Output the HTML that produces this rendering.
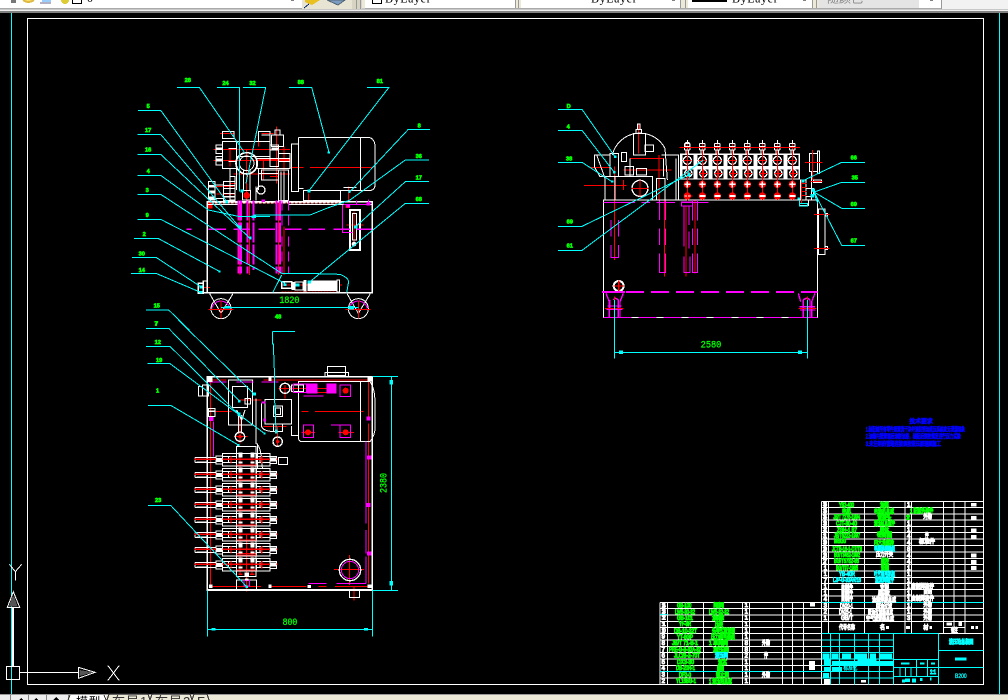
<!DOCTYPE html>
<html><head><meta charset="utf-8"><title>CAD</title>
<style>
html,body{margin:0;padding:0;background:#000;width:1008px;height:700px;overflow:hidden}
svg{position:absolute;left:0;top:0;font-family:"Liberation Sans","Noto Sans CJK SC",sans-serif}
.z{fill:none;stroke-width:3}
.w{stroke:#fff;fill:none}.r{stroke:#f00;fill:none}.m{stroke:#f0f;fill:none}.c{stroke:#0ff;fill:none}
.fw{fill:#fff;stroke:none}.fr{fill:#f00;stroke:none}.fm{fill:#f0f;stroke:none}.fc{fill:#0ff;stroke:none}.fk{fill:#000;stroke:none}
.lb{fill:#0f0;stroke:#0f0;stroke-width:2;font-size:17px;font-weight:bold}
.dm{fill:#0f0;stroke:#0f0;stroke-width:1;font-size:30px;font-family:"Liberation Mono",monospace}
.tg text{font-size:18px;stroke-width:3.2}
.tg .g{fill:#0f0;stroke:#0f0}.tg .k{fill:#0ff;stroke:#0ff}.tg .h{fill:#fff;stroke:#fff}
.bl text{font-size:18px;fill:#00f;stroke:#00f;stroke-width:2.4}
</style></head><body>
<svg width="1008" height="700" viewBox="0 0 1008 700" shape-rendering="crispEdges">
<defs>
<g id="row">
<path class="w" d="M195,412H258M195,428H258M195,412V428M258,408H278V432H258ZM278,400H320V438H278ZM380,400H420V438H380ZM420,410H440V430H420ZM278,410H320M278,428H320M380,410H420M380,428H420"/>
<path class="w" d="M295,410V428H310M390,412V428M320,400H380M320,438H380"/>
<path class="r" d="M193,418H443M303,408V430M395,408V430" stroke-width="4"/>
<path class="fw" d="M325,398H337V412H325ZM361,398H373V412H361ZM258,414H278V426H258ZM420,412H440V424H420ZM200,424H230V428H200ZM325,425H337V430H325ZM361,425H373V430H361Z"/>
<path class="r" d="M320,435H380M325,448H337M360,448H374" stroke-width="4"/>
</g>
<g id="vc">
<rect class="fw" x="-22" y="0" width="45" height="78"/>
<rect class="fk" x="-15" y="5" width="33" height="33"/>
<rect class="fk" x="-15" y="48" width="33" height="27"/>
<circle class="w" cx="0" cy="21" r="12" stroke-width="4"/><circle class="w" cx="3" cy="60" r="11" stroke-width="4"/>
<path class="r" d="M-12,21H12M0,9V33M-8,60H14M3,48V72M0,-40V140" stroke-width="3"/>
<path class="w" d="M-8,-30H8M-8,-20H8M-8,-10H8M-8,-30V-10M8,-30V-10M0,-40V-30M-4,-10V0M4,-10V0"/>
<circle class="fr" cx="0" cy="93" r="11"/>
<circle class="fr" cx="0" cy="128" r="11"/>
<path class="w" d="M-9,93H9M0,84V102M-9,128H9" stroke-width="5"/>
</g>
<g id="wh">
<circle class="w" cx="0" cy="0" r="30"/><path class="w" d="M-34,-45L0,14L36,-45"/>
<path class="m" d="M-28,0A28,28 0 0 1 27,0"/>
<path class="r" d="M-38,3H37M0,-25V30"/>
</g>
</defs>

<rect width="1008" height="700" fill="#000"/>

<!-- toolbar -->
<rect x="0" y="0" width="1008" height="13" fill="#ece9d8"/>
<rect x="0" y="8" width="1008" height="2" fill="#c8c8c8"/>
<rect x="0" y="10" width="1008" height="1" fill="#eee"/>
<rect x="0" y="11" width="1008" height="2" fill="#808080"/>
<rect x="0" y="0" width="302" height="8" fill="#fff"/>
<rect x="302" y="0" width="50" height="9" fill="#e8e4d4"/>
<rect x="352" y="0" width="10" height="9" fill="#d8d4c4"/>
<rect x="365" y="0" width="150" height="8" fill="#fff"/>
<rect x="521" y="0" width="159" height="8" fill="#fff"/>
<rect x="688" y="0" width="124" height="8" fill="#fff"/>
<rect x="819" y="0" width="100" height="8" fill="#e4e4e4"/>
<rect x="919" y="0" width="22" height="8" fill="#fff"/>
<rect x="942" y="0" width="66" height="9" fill="#f2f2f2"/>
<path d="M356.500,0V9M360.500,0V9M515.500,0V9M518.500,0V9M680.500,0V9M685.500,0V9M812.500,0V9M816.500,0V9M941.500,0V9" stroke="#999" fill="none"/>
<path d="M0,8.500H302M365,8.500H941" stroke="#aaa" fill="none"/>
<rect x="11" y="0" width="5" height="3" fill="#777"/>
<path d="M23,0Q28,4 34,0" stroke="#db4" stroke-width="2" fill="#fd6"/>
<rect x="42" y="0" width="9" height="2" fill="#9cf"/><path d="M40,3H51" stroke="#668" fill="none"/>
<circle cx="65" cy="0" r="4" fill="#dc3"/>
<path d="M72.500,0V3.500H81.500V0" stroke="#000" fill="none"/>
<text x="87" y="2" font-size="12" fill="#000" font-family="Liberation Serif,serif">0</text>
<path d="M291,0H294" stroke="#000" fill="none"/>
<path d="M305,2L312,5L320,0H305Z" fill="#e8c020"/><path d="M304,8L309,4" stroke="#026" fill="none"/>
<path d="M327,0L338,5L345,0Z" fill="#7a9cc0" stroke="#567"/>
<path d="M372.500,0V3.500H381.500V0" stroke="#000" fill="none"/>
<text x="385" y="2.500" font-size="12" fill="#000" font-family="Liberation Serif,serif" letter-spacing=".6">ByLayer</text>
<text x="591" y="2.500" font-size="12" fill="#000" font-family="Liberation Serif,serif" letter-spacing=".6">ByLayer</text>
<rect x="692" y="0" width="35" height="2" fill="#000"/>
<text x="732" y="2.500" font-size="12" fill="#000" font-family="Liberation Serif,serif" letter-spacing=".6">ByLayer</text>
<text x="827" y="2.500" font-size="12" fill="#888">随颜色</text>
<path d="M672,0H675M803,0H806M930,0H933" stroke="#000" fill="none"/>

<!-- drawing frame -->
<path d="M27.500,18.500H983.500V684.500H27.500Z" stroke="#fff" fill="none"/>
<path d="M11.500,13V694M999.500,13V694" stroke="#0ff" fill="none"/>

<!-- UCS -->
<g class="z" transform="translate(0,550) scale(.33333)">
<path class="w" d="M19,349H59V389H19ZM59,367H235M235,352L285,367L235,385ZM323,346L358,392M358,346L323,392M28,43L46,65L65,43M46,65V92M40,125L22,172H59ZM38,172V349M41,172V349"/>
<path d="M239,360L280,367L239,378Z" fill="#555"/><path d="M35,140L27,170H53L43,140Z" fill="#555"/>
</g>

<!-- FRONT VIEW -->
<g class="z" transform="translate(130,70) scale(.33333)">
<path class="r" d="M250,238H480M250,272H480M385,268H480M480,292H520M540,292H725M310,312H480M395,190H430M350,240V400M440,170V340M462,230V400M330,392V615M358,392V615M445,392V615M462,470V615M535,370V392M655,350V392M672,425V530M650,465H700M455,645H636M222,652H240M300,340H320M255,350H310M260,372H315M385,190V230M400,265V330M420,320H445M300,235V290M270,190H310"/>
<path class="fw" d="M235,396H640V400H235Z"/>
<path class="r" d="M238,398H640" stroke-dasharray="5 7" stroke-width="5"/>
<path class="r" d="M455,667H630" stroke-dasharray="5 4" stroke-width="4"/>
<path class="fr" d="M232,395H248V415H232ZM646,402H660V414H646Z"/>
<path class="w" d="M232,395H727V668H232Z" stroke-width="5"/>
<path class="w" d="M232,403H325M475,403H727"/>
<path class="w" d="M505,202H715Q735,205 735,230V345Q735,362 715,362H592M505,202V355H520M485,222H505V365H485ZM520,362H632V392H520ZM692,202V362M625,362H690M640,352H680"/>
<path class="w" d="M278,185H312V205H278ZM258,225H278V250H258ZM258,260H278V285H258ZM278,215H320V295H278ZM320,215H420V260H320ZM385,185H420V215H385ZM395,195H420M425,195H460V230H425ZM420,225H445V290H420ZM380,265H480V295H380ZM395,300H445V330H395ZM435,180H450V195H435ZM445,300H475V392H445ZM453,305V390M462,305V390M300,320H315V390H300ZM235,335H255V390H235ZM255,345H280V385H255ZM280,335H315V355H280ZM280,370H315V392H280ZM338,362H362V390H338ZM378,350V392M300,295V320M320,295V360M385,295V360M445,250H480V275H445ZM295,235H320M295,275H320M420,240H445M385,310H445"/>
<circle class="w" cx="350" cy="280" r="32" stroke-width="5"/><circle class="w" cx="350" cy="280" r="22"/>
<path class="w" d="M340,300V362M360,300V362"/>
<circle class="w" cx="393" cy="360" r="12" stroke-width="4"/>
<circle class="fr" cx="350" cy="376" r="10"/>
<path class="fw" d="M258,232H278V240H258ZM258,266H278V274H258ZM236,345H255V352H236ZM236,362H255V370H236ZM236,380H255V388H236ZM280,345H315V348H280ZM280,378H315V382H280ZM425,232H445V238H425Z"/>
<path class="w" d="M660,420H690V540H660Z" stroke-width="5"/><path class="w" d="M668,430H680V510H668Z"/>
<circle class="fw" cx="672" cy="522" r="7"/>
<path class="fw" d="M533,632H620V663H533ZM520,630H530V665H520ZM485,636H495V660H485ZM620,628H630V668H620Z"/>
<path class="fk" d="M623,632H627V664H623Z"/>
<path class="w" d="M455,635H485V655H455ZM495,636H520V660H495ZM205,640H220V670H205ZM220,633H232V668H220Z" stroke-width="4"/>
<use href="#wh" x="273" y="716"/><use href="#wh" x="685" y="716"/>
<path class="m" stroke-width="4" d="M170,478H185M235,478H288M310,478H360M385,478H435M465,478H515M535,478H585M610,478H660M680,478H725"/>
<path class="m" stroke-width="6" d="M326,392V610M333,392V610M352,392V610M370,392V600M440,392V610M450,392V610" stroke-dasharray="60 6"/>
<path class="m" stroke-width="3" d="M456,392V470M476,392V470M456,500V610M476,500V610" stroke-dasharray="30 15"/>
<path class="m" d="M638,405V488H668M640,403H720M680,392V403M715,388V405"/>
<path class="fm" d="M395,388H405V396H395ZM650,403H660V412H650ZM710,396H722V406H710Z"/>
<path class="c" d="M141,52H208L345,250M261,52H328V365M339,52H407L348,340M477,52H545L597,247M711,52H777L537,362M900,178H835L660,365M897,270H826L660,390L590,415L540,435H370M897,335H826L677,470M897,400H826L540,635M24,121H92L290,395M22,193H92L327,470M22,253H92L360,505M22,316H92L235,420L330,440H420M22,373H92L455,610H520L630,613Q660,625 655,640L650,668M22,448H92L465,640M12,505H84L268,604M6,562H78L212,650M3,610H78L212,667M48,720H116L178,780M428,668L455,615M273,712H685"/>
<path class="fc" d="M331,358H341V368H331ZM532,358H542V368H532ZM593,244H600V251H593ZM655,362H662V369H655ZM672,466H682V476H672ZM533,632H543V641H533ZM496,640H508V650H496ZM460,640H470V648H460ZM327,467H335V477H327ZM358,500H365V508H358ZM287,392H294V400H287ZM365,436H378V444H365ZM265,601H272V608H265ZM208,646H218V656H208ZM208,663H217V671H208ZM285,708H300V716H285ZM656,708H672V718H656Z"/>
<g class="lb">
<text x="164" y="36">28</text><text x="277" y="45">24</text><text x="358" y="45">32</text><text x="503" y="42">88</text><text x="740" y="39">81</text>
<text x="50" y="114">5</text><text x="45" y="186">17</text><text x="45" y="244">16</text><text x="50" y="309">4</text><text x="47" y="366">3</text><text x="47" y="441">9</text><text x="38" y="498">2</text><text x="26" y="556">30</text><text x="26" y="606">14</text><text x="71" y="713">15</text><text x="73" y="767">7</text>
<text x="863" y="172">8</text><text x="857" y="264">36</text><text x="857" y="328">17</text><text x="857" y="393">68</text><text x="435" y="746">48</text>
</g>
<text class="dm" x="448" y="699" textLength="60" lengthAdjust="spacingAndGlyphs">1820</text>
</g>

<!-- BOTTOM-LEFT PLAN -->
<g class="z" transform="translate(130,320) scale(.33333)">
<path class="r" d="M241,180V800M716,180V290M716,310V790M243,800H393M415,800H530M565,800H590M615,800H716M243,180H290M320,180H370M400,180H716" />
<path class="r" d="M465,195V235M445,205H620M505,218H620M515,274H535M555,274H700M230,275H305M324,240H395M330,290V370M312,350H352M443,320V380M400,320H470M515,338H555M625,338H672"/>
<path class="r" d="M612,748H702M658,705V795M350,755V815M672,800V842M330,400V760M366,400V760M350,640V750M320,660H380M320,700H380"/>
<path class="w" d="M232,170H727V810H232Z" stroke-width="5"/>
<path class="w" d="M505,185H720Q735,205 735,250V325Q735,345 720,365H515Q505,365 505,350ZM692,185V365M585,170V157H655V170M593,167V140H647V167Z"/>
<path class="w" d="M295,180H368V315H295ZM307,200H352V262H307ZM325,285V340M335,285V340M320,270L335,300M345,270L335,300M405,238H485V312H405ZM430,258H458V290H430ZM437,264H452V284H437ZM430,312H458V335H430ZM378,235V370Q395,380 397,445H382V370M395,250V320Q400,335 440,335M485,195H520V215H485ZM484,318V347H505M205,200H218V228H205ZM218,195H235V228H218ZM235,265H255V290H235ZM345,235H362V252H345ZM320,380H378V400H320ZM320,400V770H378V400M320,770H378M320,780H380V808H320ZM658,810V832H688V810M445,412H473V434H445ZM320,808H380"/>
<circle class="w" cx="465" cy="205" r="15" stroke-width="4"/><circle class="w" cx="330" cy="350" r="14" stroke-width="4"/><circle class="w" cx="443" cy="365" r="14" stroke-width="4"/>
<circle class="w" cx="660" cy="750" r="32" stroke-width="4"/><circle class="m" cx="660" cy="750" r="26" stroke-width="3"/>
<use href="#row"/><use href="#row" y="45"/><use href="#row" y="90"/><use href="#row" y="135"/><use href="#row" y="180"/><use href="#row" y="225"/><use href="#row" y="270"/><use href="#row" y="315"/>
<path class="fm" d="M530,190H563V220H530ZM590,190H620V220H590ZM237,291H250V303H237ZM709,290H722V302H709ZM711,407H724V419H711ZM709,549H722V561H709ZM711,694H724V706H711ZM400,296H408V304H400ZM395,244H406V250H395Z"/>
<path class="m" d="M520,315H550V352H520ZM630,195H662V230H630ZM630,315H662V352H630ZM490,192H530V218H490ZM520,228H580M603,315H630M235,186H290M320,186H370M395,186H445M708,365V610M708,630V700M708,710V790M250,305V410M535,790H590M620,790H708M630,790H675M342,782H358V798H342Z"/>
<circle class="fr" cx="534" cy="337" r="9"/><circle class="fr" cx="647" cy="337" r="9"/><circle class="fr" cx="647" cy="212" r="9"/><circle class="fr" cx="330" cy="350" r="5"/><circle class="fr" cx="443" cy="365" r="5"/>
<path class="fw" d="M234,172H248V186H234ZM415,173H425V183H415ZM712,173H724V185H712ZM237,793H248V804H237ZM415,793H425V804H415ZM532,795H543V804H532ZM712,793H724V804H712ZM343,758H357V770H343ZM345,775H355V782H345ZM236,272H254V276H236Z"/>
<path class="c" d="M48,25H116L330,245M48,79H120L325,282M52,131H120L403,340M54,256H122L325,375M54,556H122L350,800M145,0L372,222M427,34H495M427,34V72H430L433,150V222L438,330M232,812V950M727,812V950M232,928H727M727,169H804M727,811H804M785,169V811"/>
<path class="fc" d="M324,240H332V248H324ZM322,278H332V288H322ZM368,218H378V226H368ZM400,337H406V343H400ZM321,372H329V378H321ZM346,796H354V804H346ZM435,328H443V340H435ZM245,924H257V932H245ZM702,924H714V932H702ZM779,180H789V194H779ZM778,783H789V797H778Z"/>
<g class="lb">
<text x="75" y="16">7</text><text x="74" y="72">12</text><text x="78" y="126">19</text><text x="78" y="218">1</text><text x="75" y="546">23</text>
</g>
<text class="dm" x="458" y="915" textLength="44" lengthAdjust="spacingAndGlyphs">800</text>
<text class="dm" transform="translate(770,519) rotate(-90)" textLength="60" lengthAdjust="spacingAndGlyphs">2380</text>
</g>

<!-- SIDE VIEW -->
<g class="z" transform="translate(550,100) scale(.33333)">
<path class="r" d="M102,256H230M194,200V480M220,240V270M120,203H180M265,72V160M220,210H365M240,175H340M327,165V300M343,300V530M408,320V530M435,300V520"/>
<path class="w" d="M160,300H803V652H160Z"/>
<path class="w" d="M165,230H308V300H165ZM195,300V230M250,100H287V165H250ZM258,88H275V100H258ZM262,72H270V88H262ZM187,165A85,85 0 0 1 345,145L352,240M133,165H180V230H150L133,200ZM140,165L165,235M180,160H205V230H180ZM215,158H230V185H215ZM225,200H250V225H225ZM260,205H290V225H260ZM285,135H310V155H285ZM240,175V230M320,235H345V300H320ZM335,165H385V300H378V175M340,175V230"/>
<circle class="w" cx="270" cy="265" r="24" stroke-width="4"/>
<path class="r" d="M245,265H295M270,240V290"/>
<circle class="w" cx="206" cy="558" r="15" stroke-width="6"/>
<path class="r" d="M190,558H222M206,542V574" stroke-width="4"/>
<use href="#vc" x="412" y="160"/><use href="#vc" x="457" y="160"/><use href="#vc" x="502" y="160"/><use href="#vc" x="547" y="160"/><use href="#vc" x="592" y="160"/><use href="#vc" x="637" y="160"/><use href="#vc" x="682" y="160"/><use href="#vc" x="727" y="160"/>
<circle class="w" cx="412" cy="135" r="8" stroke-width="4"/>
<path class="r" d="M388,143H750M400,288H428M412,275V302" />
<path class="w" d="M778,160H803V215H778ZM803,153H809V220H803ZM785,215V300M790,240H815V248H790ZM805,327H825V463H805ZM825,340H832V348H825ZM825,440H832V448H825ZM752,240H768V300H752ZM768,265H790V290H768ZM748,300H775V317H748Z"/>
<path class="r" d="M765,187H818M788,150V240M782,244H818M755,240V310M792,343H838M792,445H838M756,250H770M756,262H770M756,274H770M756,286H770"/>
<path class="m" stroke-width="3" d="M160,307H255M275,307H300M320,307H375M395,307H476M183,360V410M205,360V410M183,435V472H205V435M328,302V360M347,302V360M328,385V435M347,385V435M328,460V518H347V460M402,320V440M417,320V375M428,300V362M443,300V362M402,395V440M417,395V445M428,385V435M443,385V435M402,470V518H420V470M428,460V518H443V460M394,306H428V318H394Z"/>
<path class="m" stroke-width="6" d="M156,576H225M228,576H282M303,576H357M378,576H432M453,576H507M528,576H582M603,576H657M678,576H732M753,576H803"/>
<path class="m" stroke-width="4" d="M168,580L178,605V652M220,580L210,605V652M190,600Q195,590 205,600V652M180,600V625M205,600V625M172,618H215M170,628H218M795,580L785,605V652M745,580L752,605M760,600Q770,590 780,600V652M760,600V652M748,620H795M750,630H797"/>
<path class="m" d="M160,652H245M265,652H320M340,652H395M415,652H470M490,652H545M565,652H620M640,652H695M715,652H803"/>
<path class="r" d="M165,625H220M193,590V652M745,625H800M772,590V652"/>
<path class="c" d="M24,28H96L195,170M24,91H96L193,217M24,187H96L186,245M24,379H96L415,225M24,451H96L460,180M945,187H875L757,243M945,247H875L790,277M945,325H875L785,272M945,436H875L790,272L803,310M193,600V775M772,600V775M193,757H772M748,310H772V318H748V300"/>
<path class="fc" d="M192,167H199V174H192ZM189,213H197V221H189ZM183,242H190V248H183ZM412,218H422V230H412ZM754,239H763V248H754ZM785,265H795V275H785ZM782,282H792V292H782ZM742,292H752V298H742ZM207,752H219V762H207ZM744,752H756V762H744Z"/>
<g class="lb">
<text x="50" y="24">D</text><text x="50" y="86">4</text><text x="48" y="181">38</text><text x="50" y="370">69</text><text x="50" y="442">61</text>
<text x="902" y="179">66</text><text x="905" y="238">35</text><text x="902" y="318">69</text><text x="902" y="427">67</text>
</g>
<text class="dm" x="452" y="743" textLength="62" lengthAdjust="spacingAndGlyphs">2580</text>
</g>

<!-- blue notes -->
<g class="bl" transform="translate(850,410) scale(.33333)">
<text x="178" y="40" textLength="70" lengthAdjust="spacingAndGlyphs">技术要求</text>
<text x="47" y="65" textLength="298" lengthAdjust="spacingAndGlyphs">1.装配前所有零件须清洗干净并涂防锈油液压系统应无泄漏现象</text>
<text x="47" y="86" textLength="285" lengthAdjust="spacingAndGlyphs">2.油箱内壁清理后涂耐油漆，装配后须按规定进行压力试验</text>
<text x="47" y="108" textLength="226" lengthAdjust="spacingAndGlyphs">3.未注明的管路连接须按液压原理图施工</text>
</g>

<!-- TITLE BLOCK -->
<g class="z" transform="translate(650,490) scale(.33333)">
<path class="w" d="M514,34H1000V583H0M514,34V583M536,34V394M643,34V430M765,34V430M784,34V430M880,34V430M912,34V430M945,34V430"/>
<path class="w" d="M514,53H1000M514,72H1000M514,90H1000M514,109H1000M514,128H1000M514,147H1000M514,167H1000M514,186H1000M514,205H1000M514,224H1000M514,243H1000M514,262H1000M514,281H1000M514,299H1000M514,318H1000M514,337H1000M514,356H1000M514,375H1000M514,394H1000M514,430H1000M880,412H945"/>
<path class="w" d="M30,337H514M30,356H514M30,375H514M30,394H514M30,413H514M30,431H514M30,450H514M30,469H514M30,488H514M30,507H514M30,526H514M30,545H514M30,564H514M30,337V583M52,337V583M160,337V583M278,337V583M298,337V583M398,337V583M428,337V583M460,337V583M1000,34V583M536,394V430"/>
<path class="c" d="M30,373H52M514,337H1000M30,545H514M514,431H865M514,450H730M514,469H730M514,488H730M514,507H730M514,526H730M514,545H730M514,564H730M541,431V583M568,431V583M614,431V583M655,431V583M688,431V583M730,431V583M865,431V583M865,481H1000M865,533H1000M730,508H865M730,532H865M730,560H865M800,508V560M833,508V560M750,532V560M767,532V560M783,532V560"/>
<path class="fc" d="M518,491H538V505H518ZM545,491H565V505H545ZM576,491H603V505H576ZM614,491H651V505H614ZM660,491H678V508H660ZM690,491H726V505H690ZM522,508H540V526H522ZM546,513H730V527H546ZM622,507H680V513H622ZM522,531H540V545H522ZM546,531H576V545H546ZM519,549H537V562H519ZM915,502H950V512H915ZM753,517H778V524H753ZM810,517H824V524H810ZM843,517H855V524H843ZM765,565H780V576H765ZM756,568H765V578H756ZM786,565H798V578H786ZM810,564H818V573H810ZM840,562H845V572H840Z"/>
<path class="fw" d="M522,567H540V583H522ZM633,570H648V578H633ZM477,513H495V540H477ZM480,339H495V350H480ZM963,39H980V50H963ZM963,78H980V90H963ZM963,115H980V128H963ZM963,135H980V147H963ZM963,190H980V203H963ZM963,210H980V222H963ZM963,228H980V240H963ZM890,398H906V407H890ZM925,396H936V408H925ZM963,408H972V417H963ZM976,408H984V417H976ZM708,408H717V417H708ZM838,408H846V417H838ZM768,408H780V417H768Z"/>
<g class="tg">
<text class="g" x="567" y="51" textLength="45" lengthAdjust="spacingAndGlyphs">YB2-400</text><text class="g" x="690" y="51" textLength="27" lengthAdjust="spacingAndGlyphs">油泵</text>
<text class="g" x="576" y="70" textLength="27" lengthAdjust="spacingAndGlyphs">电机</text><text class="g" x="672" y="71" textLength="60" lengthAdjust="spacingAndGlyphs">电动机总成</text><text class="g" x="780" y="69" textLength="70" lengthAdjust="spacingAndGlyphs">1 配套外购件</text>
<text class="g" x="550" y="87" textLength="80" lengthAdjust="spacingAndGlyphs">JB/T 7275-1994</text><text class="g" x="682" y="88" textLength="42" lengthAdjust="spacingAndGlyphs">管接头</text><text class="h" x="820" y="86" textLength="26" lengthAdjust="spacingAndGlyphs">外购</text>
<text class="g" x="558" y="107" textLength="63" lengthAdjust="spacingAndGlyphs">CJT-30-40</text><text class="g" x="672" y="107" textLength="63" lengthAdjust="spacingAndGlyphs">液压缸总成件</text>
<text class="g" x="561" y="126" textLength="60" lengthAdjust="spacingAndGlyphs">ZGH-1 B7</text><text class="g" x="690" y="126" textLength="27" lengthAdjust="spacingAndGlyphs">阀体</text>
<text class="g" x="552" y="143" textLength="78" lengthAdjust="spacingAndGlyphs">JB/T6222-1997</text><text class="g" x="681" y="141" textLength="45" lengthAdjust="spacingAndGlyphs">密封圈</text><text class="h" x="825" y="143" textLength="11" lengthAdjust="spacingAndGlyphs">件</text>
<text class="g" x="552" y="159" textLength="36" lengthAdjust="spacingAndGlyphs">M8x30</text><text class="g" x="672" y="165" textLength="60" lengthAdjust="spacingAndGlyphs">内六角螺栓</text><text class="h" x="807" y="161" textLength="48" lengthAdjust="spacingAndGlyphs">标准件</text>
<text class="g" x="546" y="183" textLength="90" lengthAdjust="spacingAndGlyphs">JCTB-16-1-D7/T8</text><text class="k" x="672" y="183" textLength="63" lengthAdjust="spacingAndGlyphs">电磁换向阀组</text>
<text class="g" x="552" y="201" textLength="78" lengthAdjust="spacingAndGlyphs">BG/T3452-1992</text><text class="h" x="678" y="200" textLength="51" lengthAdjust="spacingAndGlyphs">压力开关</text>
<text class="g" x="552" y="219" textLength="75" lengthAdjust="spacingAndGlyphs">BG/T5782-86</text><text class="g" x="693" y="220" textLength="24" lengthAdjust="spacingAndGlyphs">螺栓</text>
<text class="g" x="558" y="240" textLength="66" lengthAdjust="spacingAndGlyphs">BG/T97-1985</text><text class="g" x="693" y="240" textLength="24" lengthAdjust="spacingAndGlyphs">垫圈</text>
<text class="k" x="567" y="258" textLength="48" lengthAdjust="spacingAndGlyphs">YB-40R</text><text class="k" x="672" y="258" textLength="63" lengthAdjust="spacingAndGlyphs">叶片泵电机组</text>
<text class="k" x="549" y="276" textLength="84" lengthAdjust="spacingAndGlyphs">LJP-G-30AR/16</text><text class="k" x="675" y="276" textLength="57" lengthAdjust="spacingAndGlyphs">溢流阀组件</text>
<text class="h" x="573" y="298" textLength="36" lengthAdjust="spacingAndGlyphs">自制件</text><text class="h" x="690" y="298" textLength="27" lengthAdjust="spacingAndGlyphs">支架</text><text class="h" x="784" y="296" textLength="68" lengthAdjust="spacingAndGlyphs">自制焊接件</text>
<text class="h" x="573" y="315" textLength="36" lengthAdjust="spacingAndGlyphs">自制件</text><text class="h" x="684" y="315" textLength="36" lengthAdjust="spacingAndGlyphs">底板</text><text class="h" x="820" y="311" textLength="26" lengthAdjust="spacingAndGlyphs">自制</text>
<text class="h" x="573" y="333" textLength="36" lengthAdjust="spacingAndGlyphs">自制件</text><text class="h" x="666" y="336" textLength="72" lengthAdjust="spacingAndGlyphs">油箱焊接总成</text><text class="h" x="784" y="332" textLength="68" lengthAdjust="spacingAndGlyphs">自制焊接件</text>
<text class="h" x="570" y="354" textLength="39" lengthAdjust="spacingAndGlyphs">DN20-1</text><text class="h" x="678" y="355" textLength="48" lengthAdjust="spacingAndGlyphs">回油过滤</text><text class="h" x="820" y="351" textLength="26" lengthAdjust="spacingAndGlyphs">外购</text>
<text class="h" x="567" y="372" textLength="39" lengthAdjust="spacingAndGlyphs">DN25-1</text><text class="h" x="654" y="373" textLength="75" lengthAdjust="spacingAndGlyphs">吸油过滤器总成</text><text class="h" x="820" y="372" textLength="26" lengthAdjust="spacingAndGlyphs">外购</text>
<text class="h" x="573" y="390" textLength="36" lengthAdjust="spacingAndGlyphs">GB/T</text><text class="h" x="648" y="393" textLength="84" lengthAdjust="spacingAndGlyphs">空气滤清器总成</text><text class="h" x="820" y="390" textLength="26" lengthAdjust="spacingAndGlyphs">外购</text>
<text class="h" x="567" y="418" textLength="48" lengthAdjust="spacingAndGlyphs">代号名称</text><text class="h" x="690" y="418" textLength="15" lengthAdjust="spacingAndGlyphs">名</text>
<text class="h" x="820" y="418" textLength="15" lengthAdjust="spacingAndGlyphs">材</text>
<text class="h" x="903" y="428" textLength="20" lengthAdjust="spacingAndGlyphs">备注</text>
<text class="g" x="81" y="352" textLength="43" lengthAdjust="spacingAndGlyphs">GB-100</text><text class="g" x="190" y="353" textLength="32" lengthAdjust="spacingAndGlyphs">闸阀</text>
<text class="g" x="75" y="372" textLength="60" lengthAdjust="spacingAndGlyphs">LW5-30-32</text><text class="g" x="177" y="372" textLength="60" lengthAdjust="spacingAndGlyphs">LW5-32-32</text>
<text class="g" x="81" y="390" textLength="48" lengthAdjust="spacingAndGlyphs">GB-101</text><text class="g" x="186" y="390" textLength="36" lengthAdjust="spacingAndGlyphs">油标</text>
<text class="g" x="87" y="408" textLength="36" lengthAdjust="spacingAndGlyphs">YF-8R</text><text class="g" x="195" y="410" textLength="24" lengthAdjust="spacingAndGlyphs">压表</text>
<text class="g" x="72" y="429" textLength="69" lengthAdjust="spacingAndGlyphs">DB-10-32T</text><text class="g" x="186" y="429" textLength="69" lengthAdjust="spacingAndGlyphs">先导式溢流阀</text>
<text class="g" x="81" y="447" textLength="48" lengthAdjust="spacingAndGlyphs">YT-8GP</text><text class="g" x="183" y="447" textLength="72" lengthAdjust="spacingAndGlyphs">压力继电器组</text>
<text class="g" x="66" y="465" textLength="78" lengthAdjust="spacingAndGlyphs">JB/T 71-B-1</text><text class="g" x="177" y="465" textLength="57" lengthAdjust="spacingAndGlyphs">1 单向阀</text><text class="h" x="336" y="465" textLength="24" lengthAdjust="spacingAndGlyphs">外购</text>
<text class="g" x="57" y="484" textLength="96" lengthAdjust="spacingAndGlyphs">PRE-G-B-32A-32</text><text class="g" x="189" y="486" textLength="48" lengthAdjust="spacingAndGlyphs">减压阀</text>
<text class="g" x="72" y="503" textLength="78" lengthAdjust="spacingAndGlyphs">JLC/B-2-70T</text><text class="k" x="195" y="503" textLength="39" lengthAdjust="spacingAndGlyphs">液压阀</text><text class="h" x="342" y="503" textLength="12" lengthAdjust="spacingAndGlyphs">件</text>
<text class="g" x="81" y="522" textLength="51" lengthAdjust="spacingAndGlyphs">DX3-30</text><text class="g" x="204" y="523" textLength="27" lengthAdjust="spacingAndGlyphs">滤芯</text>
<text class="g" x="78" y="540" textLength="57" lengthAdjust="spacingAndGlyphs">DB-20R-1</text><text class="g" x="201" y="543" textLength="21" lengthAdjust="spacingAndGlyphs">阀</text>
<text class="g" x="87" y="561" textLength="36" lengthAdjust="spacingAndGlyphs">DF2-0</text><text class="g" x="198" y="561" textLength="39" lengthAdjust="spacingAndGlyphs">截止阀</text><text class="h" x="336" y="561" textLength="24" lengthAdjust="spacingAndGlyphs">外购</text>
<text class="g" x="78" y="579" textLength="60" lengthAdjust="spacingAndGlyphs">YL16BG-1</text><text class="g" x="177" y="581" textLength="69" lengthAdjust="spacingAndGlyphs">1 液压站总成</text>
<text class="h" x="35" y="352" textLength="12">14</text><text class="h" x="35" y="371" textLength="12">13</text><text class="h" x="35" y="389" textLength="12">12</text><text class="h" x="35" y="408" textLength="12">11</text><text class="h" x="35" y="428" textLength="12">10</text><text class="h" x="35" y="446" textLength="12">9</text><text class="h" x="35" y="465" textLength="12">8</text><text class="h" x="35" y="484" textLength="12">7</text><text class="h" x="35" y="503" textLength="12">6</text><text class="h" x="35" y="522" textLength="12">5</text><text class="h" x="35" y="540" textLength="12">4</text><text class="h" x="35" y="560" textLength="12">3</text><text class="h" x="35" y="579" textLength="12">2</text>
<text class="h" x="284" y="351">1</text><text class="h" x="284" y="370">1</text><text class="h" x="284" y="389">1</text><text class="h" x="284" y="408">1</text><text class="h" x="284" y="427">1</text><text class="h" x="284" y="446">1</text><text class="h" x="284" y="465">8</text><text class="h" x="284" y="484">8</text><text class="h" x="284" y="503">2</text><text class="h" x="284" y="522">1</text><text class="h" x="284" y="540">1</text><text class="h" x="284" y="560">1</text><text class="h" x="284" y="579">1</text>
<text class="h" x="519" y="50" textLength="12">36</text><text class="h" x="519" y="69" textLength="12">35</text><text class="h" x="519" y="87" textLength="12">34</text><text class="h" x="519" y="106" textLength="12">33</text><text class="h" x="519" y="125" textLength="12">32</text><text class="h" x="519" y="144" textLength="12">31</text><text class="h" x="519" y="163" textLength="12">30</text><text class="h" x="519" y="183" textLength="12">29</text><text class="h" x="519" y="202" textLength="12">28</text><text class="h" x="519" y="220" textLength="12">27</text><text class="h" x="521" y="240">1</text><text class="h" x="521" y="258">1</text><text class="h" x="521" y="277">7</text><text class="h" x="521" y="296">1</text><text class="h" x="521" y="315">1</text><text class="h" x="521" y="333">4</text><text class="h" x="521" y="352">3</text><text class="h" x="521" y="371">2</text><text class="h" x="521" y="390">1</text>
<text class="h" x="771" y="50">1</text><text class="g" x="768" y="88" textLength="12">12</text><text class="h" x="771" y="106">1</text><text class="h" x="771" y="125">1</text><text class="h" x="771" y="144">4</text><text class="h" x="771" y="163">4</text><text class="h" x="771" y="183">8</text><text class="h" x="771" y="202">4</text><text class="h" x="771" y="220">4</text><text class="h" x="771" y="240">1</text><text class="h" x="771" y="258">1</text><text class="h" x="771" y="277">1</text><text class="h" x="771" y="296">1</text><text class="h" x="771" y="315">1</text><text class="h" x="771" y="333">1</text><text class="h" x="771" y="352">1</text><text class="h" x="771" y="371">1</text><text class="h" x="771" y="390">3</text>
<text class="k" x="897" y="462" textLength="73" lengthAdjust="spacingAndGlyphs">液压站总装图</text>
<text class="k" x="915" y="564" textLength="35" lengthAdjust="spacingAndGlyphs" style="stroke-width:1">B200</text>
<text class="k" x="580" y="540" textLength="42" lengthAdjust="spacingAndGlyphs" style="stroke-width:1">标准化</text>
<text class="k" x="840" y="552" textLength="18" lengthAdjust="spacingAndGlyphs">1:1</text>
</g>
</g>

<!-- bottom tabs -->
<rect x="0" y="694" width="1008" height="6" fill="#ece9d8"/>
<rect x="0" y="694" width="1008" height="1" fill="#999"/>
<rect x="0" y="695" width="68" height="5" fill="#eee"/>
<path d="M10.500,695V700M28.500,695V700M46.500,695V700M68.500,695V700" stroke="#888" fill="none"/>
<path d="M21,698L19,700H23ZM36,698L34,700H38" fill="#000"/>
<path d="M56,697L59,700H53Z" fill="#000"/>
<rect x="70" y="695" width="36" height="5" fill="#fff"/>
<path d="M68,700L70,695M104,695L106,700M107,700L109,694H148L150,700M150,700L152,694H190L192,700M192,700L194,694H207L209,700" stroke="#333" fill="none"/>
<text x="76" y="706" font-size="12" fill="#000" letter-spacing=".5">模型</text>
<text x="112" y="706" font-size="13" fill="#333" letter-spacing="1">布局1</text>
<text x="155" y="706" font-size="13" fill="#333" letter-spacing="1">布局2</text>
<text x="197" y="706" font-size="13" fill="#333">F</text>
</svg>
</body></html>
